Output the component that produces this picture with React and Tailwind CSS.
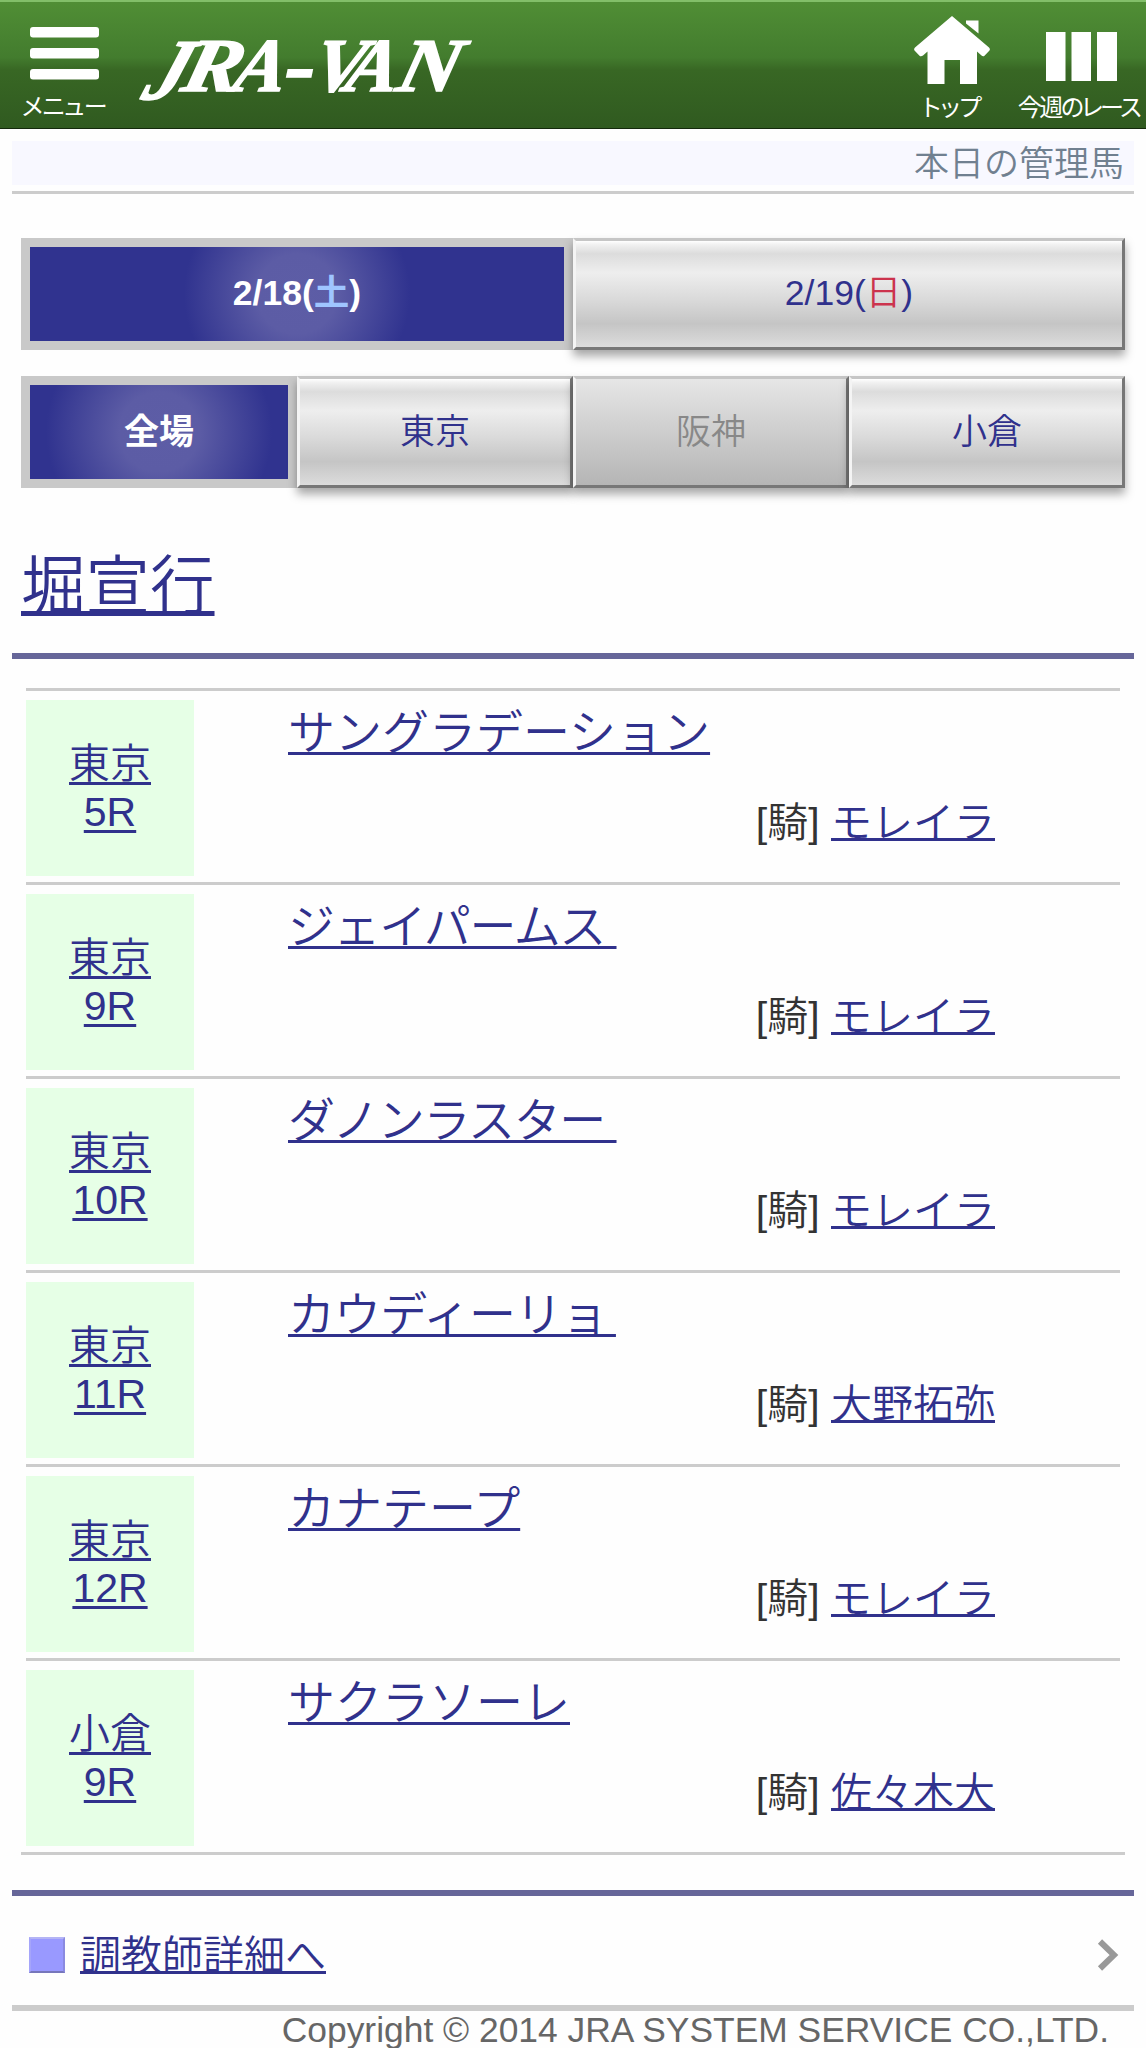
const dates = [
  {id: '18', text: '2/18', day: '土', dayClass: 'text-[#9fc5ff]', active: true},
  {id: '19', text: '2/19', day: '日', dayClass: 'text-[#cc334d]'},
]

const places = [
  {id: 'all', text: '全場', active: true},
  {id: 'tokyo', text: '東京'},
  {id: 'hanshin', text: '阪神', disabled: true},
  {id: 'kokura', text: '小倉'},
]

// some names carry a trailing space inside the link
const horses = [
  {place: '東京', race: '5R', name: 'サングラデーション', jockey: 'モレイラ'},
  {place: '東京', race: '9R', name: 'ジェイパームス\u00a0', jockey: 'モレイラ', tracking: 'tracking-[-1.4px]'},
  {place: '東京', race: '10R', name: 'ダノンラスター\u00a0', jockey: 'モレイラ', tracking: 'tracking-[-1.4px]'},
  {place: '東京', race: '11R', name: 'カウディーリョ\u2009', jockey: '大野拓弥', tracking: 'tracking-[-0.9px]'},
  {place: '東京', race: '12R', name: 'カナテープ', jockey: 'モレイラ'},
  {place: '小倉', race: '9R', name: 'サクラソーレ', jockey: '佐々木大'},
]

function MenuIcon() {
  return (
    <svg width="69" height="53" viewBox="0 0 69 53" fill="#fff">
      <rect width="69" height="10.5" rx="3" />
      <rect y="21" width="69" height="10.5" rx="3" />
      <rect y="42" width="69" height="10.5" rx="3" />
    </svg>
  )
}

function HomeIcon() {
  return (
    <svg width="76" height="68" viewBox="0 0 76 68" fill="#fff">
      <path d="M38 0 L75 31.5 Q76.500 33 75.500 34.500 L70.500 39.800 Q69 41 67.500 39.600 L63 35.500 V68 H46 V44 H30.500 V68 H13.500 V35.500 L9 39.600 Q7 41 5.500 39.800 L.5 34.500 Q-.5 33 1 31.500 Z" />
      <path d="M52 4.500 H64.500 V17.500 L52 7.500 Z" />
    </svg>
  )
}

function RaceIcon() {
  return (
    <svg width="71" height="49" viewBox="0 0 71 49" fill="#fff">
      <rect width="19.500" height="49" />
      <rect x="25.500" width="19.500" height="49" />
      <rect x="51" width="20" height="49" />
    </svg>
  )
}

function Logo() {
  return (
    <svg width="345" height="100" viewBox="0 0 345 100" className="ml-[25px] mt-2 shrink-0 overflow-visible" fill="#fff" stroke="#fff">
      <g fontFamily="'Liberation Serif', serif" fontWeight="700" fontStyle="italic" fontSize="76" strokeWidth="1.5">
        <text transform="translate(10 89) skewX(-20) scale(1.05 1.14)">J</text>
        <text transform="translate(49 81) skewX(-14) scale(1.16 1)">R</text>
        <text transform="translate(101 81) skewX(-12) scale(1.02 1)">A</text>
        <text transform="translate(180 81) skewX(-12) scale(1 1)">V</text>
        <text transform="translate(213 81) skewX(-12) scale(1.02 1)">A</text>
        <text transform="translate(264 81) skewX(-14) scale(1.13 1)">N</text>
        <text transform="translate(155 83) scale(1.2 1.1)">-</text>
      </g>
    </svg>
  )
}

function Header() {
  return (
    <header className="flex h-[129px] border-t-2 border-b border-t-[#82bf69] border-b-[#14290c] bg-[linear-gradient(#508e35_0%,#437c2e_44%,#386724_54%,#305a20_100%)] text-[24px] leading-[24px] font-normal text-white [font-feature-settings:'palt']">
      <a className="flex w-[105px] shrink-0 flex-col items-center pt-[25px] pl-6 whitespace-nowrap">
        <MenuIcon />
        <span className="mt-[15px] tracking-[-0.5px]">メニュー</span>
      </a>
      <Logo />
      <a className="ml-auto flex w-[76px] flex-col items-center pt-[14px] whitespace-nowrap">
        <HomeIcon />
        <span className="mt-[12px]">トップ</span>
      </a>
      <a className="mr-px ml-[28px] flex w-[127px] flex-col items-center pt-[30px] whitespace-nowrap">
        <RaceIcon />
        <span className="mt-[15px] mr-1.5 tracking-[-2.5px]">今週のレース</span>
      </a>
    </header>
  )
}

function Tab({active, disabled, children}) {
  if (active) {
    return (
      <a className="bg-[#c9c9c9] p-[9px]">
        <span className="flex h-full items-center justify-center bg-[#30338f] bg-[radial-gradient(circle,#5d5da6_0,#5c5ca5_40px,#30338f_113px)] font-bold text-white">
          <span>{children}</span>
        </span>
      </a>
    )
  }

  const look = disabled
    ? 'bg-[linear-gradient(#e6e6e6,#d0d0d0_45%,#b5b5b5)] text-[#888]'
    : 'bg-[linear-gradient(#fff_0%,#f2f2f2_3%,#dcdcdc_12%,#eee_30%,#dadada_55%,#c5c5c5_78%,#dcdcdc_100%)] text-[#30318c]'

  return (
    <a className={`flex items-center justify-center border-[3px] border-t-[#c6c6c6] border-r-[#777] border-b-[#777] border-l-[#f4f4f4] shadow-[0_6px_9px_rgba(0,0,0,0.35)] ${look}`}>
      <span>{children}</span>
    </a>
  )
}

function HorseRow({horse}) {
  return (
    <li className="mx-[5px] flex h-[194px] border-t-[3px] border-[#ccc] pt-[9px]">
      <a className="flex h-[176px] w-[168px] flex-col items-center bg-[#e6ffe6] pt-[40px] text-[41px] leading-[48px]">
        <span className="underline decoration-[2.500px] underline-offset-[4px]">{horse.place}</span>
        <span className="underline decoration-[2.500px] underline-offset-[4px]">{horse.race}</span>
      </a>
      <div className="ml-[94px] flex-1">
        <p className="text-[47px] leading-[66px]">
          <a className={`underline decoration-[3px] underline-offset-[3px] ${horse.tracking || ''}`}>{horse.name}</a>
        </p>
        <p className="mt-[24px] pr-[125px] text-right text-[41px] leading-[66px]">
          <span className="text-[#333]">[騎] </span>
          <a className="underline decoration-[3px] underline-offset-[1px]">{horse.jockey}</a>
        </p>
      </div>
    </li>
  )
}

export default function App() {
  return (
    <div className="h-[2048px] w-[1146px] overflow-hidden bg-[#fefefe] font-['Liberation_Sans','Noto_Sans_CJK_JP',sans-serif] font-[350] text-[#30318c] [text-decoration-skip-ink:none]">
      <Header />
      <div className="mx-3 mt-3">
        <div className="border-b-[3px] border-[#ccc] pb-[6px]">
          <h1 className="h-[44px] bg-[#f8f8ff] pr-[10px] text-right text-[35px] leading-[45px] text-[#708090]">本日の管理馬</h1>
        </div>
        <nav className="mx-[9px] mt-[44px] grid h-[112px] grid-cols-2 text-[35.500px]">
          {dates.map((d) => (
            <Tab key={d.id} active={d.active}>
              {d.text}(<span className={d.dayClass}>{d.day}</span>)
            </Tab>
          ))}
        </nav>
        <nav className="mx-[9px] mt-[26px] grid h-[112px] grid-cols-4 text-[35px]">
          {places.map((p) => (
            <Tab key={p.id} active={p.active} disabled={p.disabled}>{p.text}</Tab>
          ))}
        </nav>
        <h2 className="h-[171px] border-b-[6px] border-[#669] pt-[51px] pl-[9px] text-[64.500px] leading-[96px]">
          <a className="underline decoration-[4.500px] underline-offset-[2px]">堀宣行</a>
        </h2>
        <ul className="mx-[9px] mt-[29px] border-b-[3px] border-[#ccc]">
          {horses.map((h) => (
            <HorseRow key={h.name} horse={h} />
          ))}
        </ul>
        <div className="mt-[35px] flex h-[121px] items-center border-t-[6px] border-b-[6px] border-t-[#669] border-b-[#ccc] pl-[17px]">
          <i className="mt-[9px] size-[36px] border-2 border-t-[#b4b4f5] border-r-[#8a8ae0] border-b-[#7676bb] border-l-[#a5a5fa] bg-[#99f]" />
          <a className="mt-[12px] ml-[15px] text-[41px] underline decoration-[3px] underline-offset-[1px]">調教師詳細へ</a>
          <svg width="22" height="32" viewBox="0 0 22 32" fill="none" stroke="#999" strokeWidth="6" className="mt-[9px] mr-[15px] ml-auto">
            <path d="M3 2.500 L17 16 L3 29.500" />
          </svg>
        </div>
        <p className="pr-[25px] text-right text-[35.400px] leading-[39px] text-[#666]">Copyright © 2014 JRA SYSTEM SERVICE CO.,LTD.</p>
      </div>
    </div>
  )
}
